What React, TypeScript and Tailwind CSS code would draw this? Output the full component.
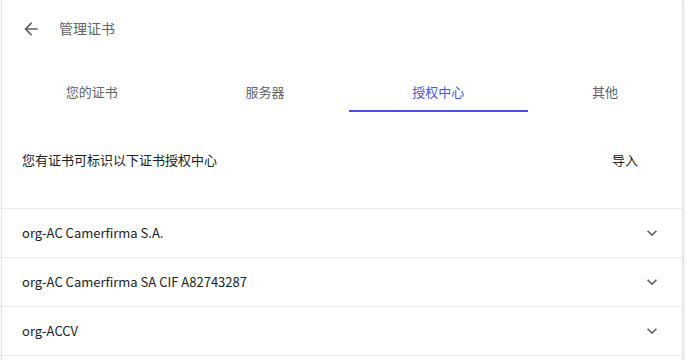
import { useState } from 'react';

const tabs = ['您的证书', '服务器', '授权中心', '其他'];

const authorities = [
  'org-AC Camerfirma S.A.',
  'org-AC Camerfirma SA CIF A82743287',
  'org-ACCV',
];

function ArrowBack() {
  return (
    <svg width="20" height="20" viewBox="0 0 24 24" fill="#5f6368">
      <path d="M20 11H7.83l5.59-5.59L12 4l-8 8 8 8 1.41-1.41L7.83 13H20v-2z" />
    </svg>
  );
}

function ExpandMore() {
  return (
    <svg width="20" height="20" viewBox="0 0 24 24" fill="#5f6368">
      <path d="M16.59 8.59L12 13.17 7.41 8.59 6 10l6 6 6-6z" />
    </svg>
  );
}

export default function App() {
  const [active, setActive] = useState(2);

  return (
    <div className="w-[687px] h-[360px] overflow-hidden bg-white font-['Noto_Sans_CJK_SC','Noto_Sans',sans-serif]">
      <div className="ml-[1px] w-[682px] min-h-[360px] bg-white border-x border-[#e3e3e3] shadow-[1px_0_3px_rgba(0,0,0,0.12)]">
        {/* Header */}
        <div className="h-[57px] flex items-center pl-[19px]">
          <button className="w-[20px] h-[20px] flex items-center justify-center">
            <ArrowBack />
          </button>
          <span className="ml-[18px] text-[14px] text-[#5f6368]">管理证书</span>
        </div>

        {/* Tabs */}
        <div className="mt-[19px] flex">
          {tabs.map((t, i) => (
            <button
              key={t}
              onClick={() => setActive(i)}
              className={
                'relative flex-auto h-[36px] pb-[4px] flex items-center justify-center text-[13px] ' +
                (i === active ? 'text-[#4a56e6]' : 'text-[#5f6368]')
              }
            >
              {t}
              {i === active && (
                <span className="absolute left-0 right-0 bottom-0 h-[2px] bg-[#4452e6]" />
              )}
            </button>
          ))}
        </div>

        {/* Intro row */}
        <div className="h-[96px] flex items-center justify-between pl-[20px] pr-[28px]">
          <span className="text-[13px] text-[#202124]">您有证书可标识以下证书授权中心</span>
          <button className="px-[16px] h-[32px] text-[13px] text-[#202124]">导入</button>
        </div>

        {/* Authority list */}
        <div className="border-b border-[#ebebeb]">
          {authorities.map((a) => (
            <div
              key={a}
              className="h-[49px] border-t border-[#ebebeb] flex items-center justify-between pl-[20px] pr-[20px]"
            >
              <span className="text-[13px] text-[#202124]">{a}</span>
              <ExpandMore />
            </div>
          ))}
        </div>
      </div>
    </div>
  );
}
